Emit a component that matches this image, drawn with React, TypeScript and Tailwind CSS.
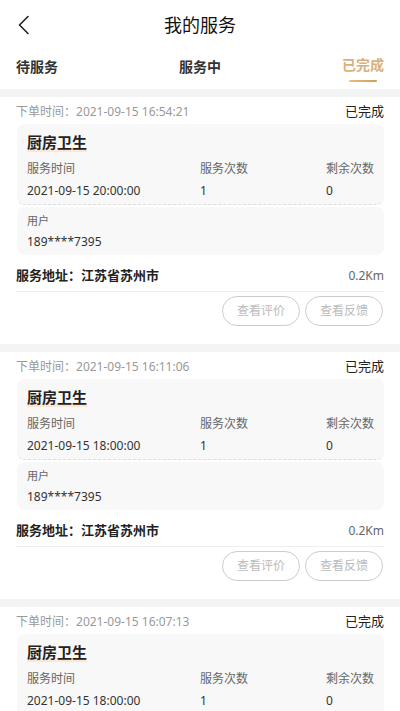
const orders = [
  { id: 1, orderedAt: '2021-09-15 16:54:21', serviceAt: '2021-09-15 20:00:00' },
  { id: 2, orderedAt: '2021-09-15 16:11:06', serviceAt: '2021-09-15 18:00:00' },
  { id: 3, orderedAt: '2021-09-15 16:07:13', serviceAt: '2021-09-15 18:00:00' },
];

function OrderCard({ orderedAt, serviceAt }: { orderedAt: string; serviceAt: string }) {
  return (
    <div className="bg-white px-4 pt-[6px] pb-[18px]">
      <div className="flex items-center justify-between h-[18px]">
        <span className="text-[12px] text-[#999]">下单时间：{orderedAt}</span>
        <span className="text-[13px] text-[#222]">已完成</span>
      </div>
      <div className="mt-[3px] ml-px bg-[#f8f8f8] rounded-lg border-b border-dashed border-[#ddd] px-[10px] pt-[6px] pb-[2px]">
        <div className="h-[24px] flex items-center">
          <span className="text-[15px] font-bold text-[#222] leading-[20px] bg-[linear-gradient(to_bottom,transparent_78%,#fde6d2_78%)]">厨房卫生</span>
        </div>
        <div className="flex mt-[5px] text-[12px] text-[#666] h-[20px] items-center">
          <span className="w-[173px]">服务时间</span>
          <span className="flex-1">服务次数</span>
          <span className="w-[48px]">剩余次数</span>
        </div>
        <div className="flex mt-px text-[12px] text-[#333] h-[22px] items-center">
          <span className="w-[173px]">{serviceAt}</span>
          <span className="flex-1">1</span>
          <span className="w-[48px]">0</span>
        </div>
      </div>
      <div className="mt-[2px] ml-px bg-[#f8f8f8] rounded-lg px-[10px] pt-[5px] pb-[2px]">
        <div className="text-[11px] text-[#666] h-[18px] flex items-center">用户</div>
        <div className="text-[12px] text-[#333] h-[22px] flex items-center mt-px">189****7395</div>
      </div>
      <div className="flex items-center justify-between h-[22px] mt-[10px]">
        <span className="text-[13px] font-bold text-[#222]">服务地址：江苏省苏州市</span>
        <span className="text-[12px] text-[#666]">0.2Km</span>
      </div>
      <div className="border-t border-[#eee] mt-[4px]" />
      <div className="flex justify-end gap-[5px] mt-[4px] pr-px">
        <button className="w-[78px] h-[30px] rounded-full border border-[#ccc] text-[12px] text-[#bbb]">查看评价</button>
        <button className="w-[78px] h-[30px] rounded-full border border-[#ccc] text-[12px] text-[#bbb]">查看反馈</button>
      </div>
    </div>
  );
}

export default function App() {
  return (
    <div className="w-[400px] h-[711px] overflow-hidden bg-[#f4f4f4] font-['Noto_Sans','Noto_Sans_CJK_SC',sans-serif]">
      <div className="bg-white">
        <div className="relative h-[50px] flex items-center justify-center">
          <svg className="absolute left-[16px] top-[15px]" width="16" height="20" viewBox="0 0 16 20" fill="none">
            <path d="M12 1.5 L3.5 10 L12 18.5" stroke="#222" strokeWidth="1.6" strokeLinecap="round" strokeLinejoin="round" />
          </svg>
          <span className="text-[18px] text-[#111]">我的服务</span>
        </div>
        <div className="flex items-center justify-between px-4 h-[39px]">
          <span className="text-[14px] font-bold text-[#333] pb-[6px]">待服务</span>
          <span className="text-[14px] font-bold text-[#333] pb-[6px]">服务中</span>
          <span className="flex flex-col items-center pb-[4px]">
            <span className="text-[14px] font-bold text-[#d9b07c]">已完成</span>
            <span className="w-[28px] h-[2px] mt-[5px] rounded-full bg-[linear-gradient(to_right,#e9bd84,#d49a5c)]" />
          </span>
        </div>
      </div>
      <div className="flex flex-col gap-2 mt-2">
        {orders.map(o => (
          <OrderCard key={o.id} orderedAt={o.orderedAt} serviceAt={o.serviceAt} />
        ))}
      </div>
    </div>
  );
}
